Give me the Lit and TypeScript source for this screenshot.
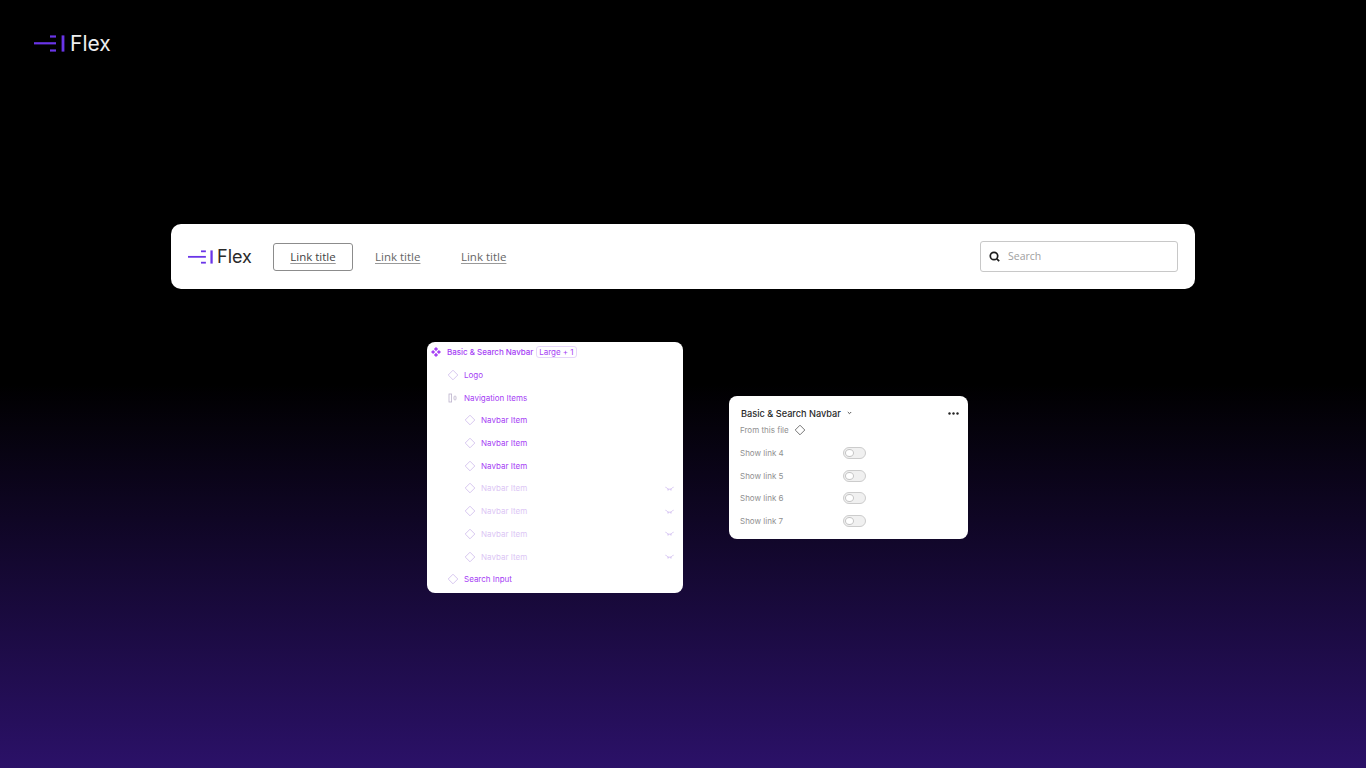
import { LitElement, html, css, svg } from "lit";
import { customElement } from "lit/decorators.js";

const diamond = (size: number, color: string, sw = 1) => html`<svg class="ico" width=${size} height=${size} viewBox="0 0 12 12" fill="none"><path d="M6 1.2 10.8 6 6 10.8 1.2 6Z" stroke=${color} stroke-width=${sw} stroke-linejoin="round"/></svg>`;

const logoMark = (w: number, h: number) => html`<svg class="mark" width=${w} height=${h} viewBox="0 0 32 17" fill="none">
  <rect x="0" y="7.2" width="22" height="2.2" fill="#6a35e8"/>
  <rect x="16" y="0.4" width="6" height="2.2" fill="#6a35e8"/>
  <rect x="16" y="14.4" width="6" height="2.2" fill="#6a35e8"/>
  <rect x="27.6" y="0.4" width="2.8" height="16.2" fill="#6a35e8"/>
</svg>`;

@customElement("app-root")
export class AppRoot extends LitElement {
  static styles = css`
    :host {
      display: block;
      width: 100%;
      height: 768px;
      overflow: hidden;
      background: linear-gradient(180deg, #000 50%, #2b1168 100%);
      font-family: "Inter", "Liberation Sans", sans-serif;
    }
    .top-logo { display: flex; align-items: center; gap: 4px; height: 20px; padding: 33px 0 0 34px; }
    .top-logo .word { font: 400 21px/22px "Inter", sans-serif; color: #eeeeee; padding-top: 1px; }
    .navbar {
      box-sizing: border-box;
      margin: 171px 0 0 171px;
      width: 1024px;
      height: 65px;
      background: #fff;
      border-radius: 10px;
      display: flex;
      align-items: center;
      padding: 0 17px 0 17px;
      font-family: "Open Sans", sans-serif;
    }
    .nav-logo { display: flex; align-items: center; gap: 3px; width: 65px; margin-right: 20px; }
    .nav-logo .word { font: 400 18px/20px "Inter", sans-serif; color: #2a2a2a; }
    .link { font-size: 11.5px; color: #666; text-decoration: underline; text-decoration-color: #999; text-underline-offset: 2px; white-space: nowrap; padding-bottom: 1px; }
    .link.active {
      box-sizing: border-box;
      width: 80px;
      height: 28px;
      border: 1.5px solid #8c8c8c;
      border-radius: 3px;
      display: flex;
      align-items: center;
      justify-content: center;
      color: #444;
      margin-right: 22px;
    }
    .link.plain { margin-right: 40.5px; }
    .search {
      box-sizing: border-box;
      margin-left: auto;
      width: 198px;
      height: 31px;
      border: 1px solid #c8c8c8;
      border-radius: 3px;
      display: flex;
      align-items: center;
      padding: 0 0 1px 8px;
      gap: 8px;
      font-size: 10.5px;
      color: #a0a0a0;
    }
    .lower { display: flex; align-items: flex-start; gap: 46px; margin: 53px 0 0 427px; }
    .tree {
      box-sizing: border-box;
      width: 256px;
      height: 251px;
      background: #fff;
      border-radius: 8px;
      padding: 0 9px 0 4px;
      color: #a640f5;
      font-size: 8px;
      font-weight: 400;
    }
    .row { display: flex; align-items: center; height: 22.72px; white-space: nowrap; }
    .row .ico { flex: none; }
    .row.root { gap: 6px; margin-top: -1.3px; }
    .row.root b { font-weight: 500; letter-spacing: -0.03px; }
    .row.l1 { padding-left: 16px; gap: 5px; }
    .row.l2 { padding-left: 33px; gap: 5px; }
    .row.off { color: #dcc6f5; }
    .hide { margin-left: auto; flex: none; }
    .badge {
      border: 1px solid #e6d6fa;
      border-radius: 3px;
      padding: 0 2.5px;
      line-height: 10px;
      margin-left: -3.5px;
      font-weight: 400;
      letter-spacing: -0.06px;
    }
    .props {
      box-sizing: border-box;
      margin-top: 54px;
      width: 239px;
      height: 143px;
      background: #fff;
      border-radius: 8px;
      padding: 8px 9px 0 11px;
      font-size: 8px;
      color: #909090;
    }
    .head { display: flex; align-items: center; height: 18px; padding-left: 1px; color: #2a2a2a; font-size: 9.2px; font-weight: 500; }
    .head .chev { margin-left: 6px; }
    .head .dots { margin-left: auto; }
    .from { display: flex; align-items: center; gap: 5px; height: 16px; margin-bottom: 4px; }
    .toggle-row { display: flex; align-items: center; height: 22.6px; }
    .toggle-row span { width: 103px; }
    .toggle {
      box-sizing: border-box;
      width: 23px;
      height: 12px;
      border: 1px solid #cccccc;
      border-radius: 6px;
      background: #f0f0f0;
      padding: 1px;
    }
    .toggle i {
      display: block;
      box-sizing: border-box;
      width: 9px;
      height: 8px;
      border: 1px solid #c4c4c4;
      border-radius: 50%;
      background: #fff;
    }
  `;

  private hiddenIcon() {
    return html`<svg class="hide" width="9" height="5" viewBox="0 0 9 5" fill="none" stroke="#c9b2ee" stroke-width=".8">
      ${svg`<path d="M1.8 2.4c.8.6 1.7.8 2.7.8s1.9-.2 2.7-.8"/><path d="M1.5 2 .5.8M3.2 3.1 3 4.6M5.8 3.1 6 4.6M7.5 2 8.5.8"/>`}
    </svg>`;
  }

  private item(label: string, off = false) {
    return html`<div class="row l2 ${off ? "off" : ""}">
      ${diamond(12, "#d8c8f0")}<span>${label}</span>${off ? this.hiddenIcon() : ""}
    </div>`;
  }

  render() {
    return html`
      <div class="top-logo">${logoMark(32, 17)}<span class="word">Flex</span></div>

      <div class="navbar">
        <div class="nav-logo">${logoMark(26, 14)}<span class="word">Flex</span></div>
        <span class="link active">Link title</span>
        <span class="link plain">Link title</span>
        <span class="link plain">Link title</span>
        <div class="search">
          <svg width="11" height="11" viewBox="0 0 11 11" fill="none" stroke="#1c1c1c" stroke-width="1.7"><circle cx="5" cy="5" r="3.7"/><path d="m7.8 7.8 2.4 2.4"/></svg>
          <span>Search</span>
        </div>
      </div>

      <div class="lower">
        <div class="tree">
          <div class="row root">
            <svg class="ico" width="10" height="10" viewBox="0 0 10 10" fill="#a640f5"><path d="M5 0 7.1 2.1 5 4.2 2.9 2.1ZM2.1 2.9 4.2 5 2.1 7.1 0 5ZM7.9 2.9 10 5 7.9 7.1 5.8 5ZM5 5.8 7.1 7.9 5 10 2.9 7.9Z"/></svg>
            <b>Basic &amp; Search Navbar</b><span class="badge">Large + 1</span>
          </div>
          <div class="row l1">${diamond(12, "#d8c8f0")}<span>Logo</span></div>
          <div class="row l1">
            <svg class="ico" width="12" height="10" viewBox="0 0 12 10" fill="none" stroke="#bcb2cc" stroke-width=".8"><rect x="2" y="1" width="2.6" height="8"/><rect x="7" y="3" width="2" height="4" rx="1"/></svg>
            <span>Navigation Items</span>
          </div>
          ${this.item("Navbar Item")}
          ${this.item("Navbar Item")}
          ${this.item("Navbar Item")}
          ${this.item("Navbar Item", true)}
          ${this.item("Navbar Item", true)}
          ${this.item("Navbar Item", true)}
          ${this.item("Navbar Item", true)}
          <div class="row l1">${diamond(12, "#d8c8f0")}<span>Search Input</span></div>
        </div>

        <div class="props">
          <div class="head">
            <span>Basic &amp; Search Navbar</span>
            <svg class="chev" width="5" height="4" viewBox="0 0 5 4" fill="none" stroke="#444" stroke-width=".9"><path d="m.8 1 1.7 1.7L4.2 1"/></svg>
            <svg class="dots" width="11" height="3" viewBox="0 0 11 3" fill="#222"><circle cx="1.5" cy="1.5" r="1.2"/><circle cx="5.5" cy="1.5" r="1.2"/><circle cx="9.5" cy="1.5" r="1.2"/></svg>
          </div>
          <div class="from"><span>From this file</span>${diamond(12, "#777")}</div>
          ${[4, 5, 6, 7].map(
            (n) => html`<div class="toggle-row"><span>Show link ${n}</span><div class="toggle"><i></i></div></div>`
          )}
        </div>
      </div>
    `;
  }
}
